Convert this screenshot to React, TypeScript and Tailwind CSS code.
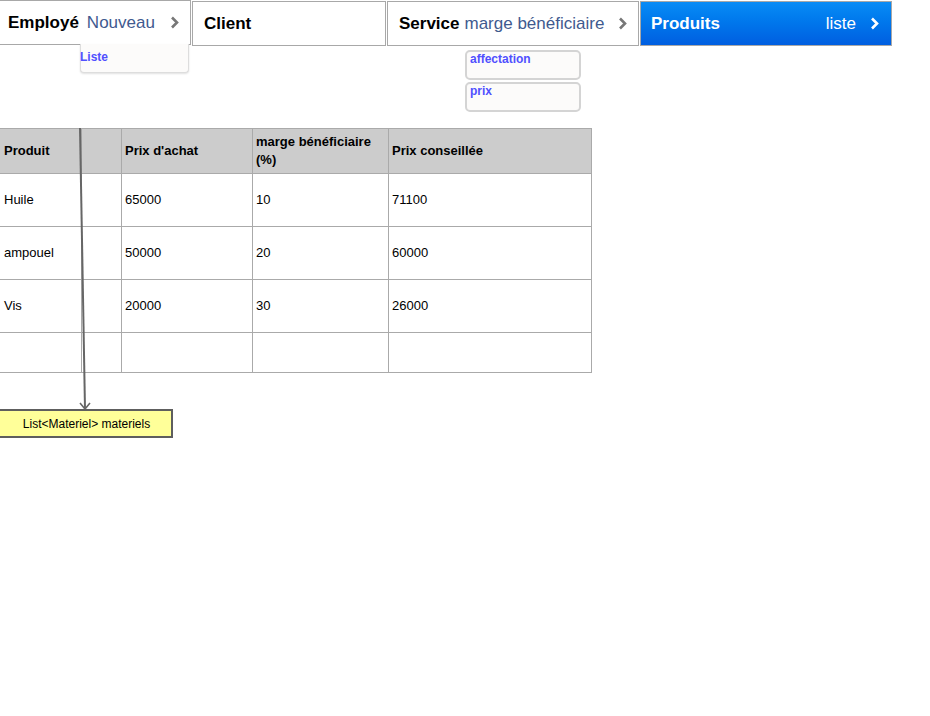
import React from "react";

const font = { fontFamily: '"Liberation Sans", Arial, sans-serif' };

function Chevron({ color }: { color: string }) {
  return (
    <svg width="9" height="13" viewBox="0 0 9 13" className="shrink-0">
      <polyline points="2,1.5 7,6.5 2,11.5" fill="none" stroke={color} strokeWidth="2.6" />
    </svg>
  );
}

const rows = [
  ["Huile", "", "65000", "10", "71100"],
  ["ampouel", "", "50000", "20", "60000"],
  ["Vis", "", "20000", "30", "26000"],
  ["", "", "", "", ""],
];

export default function App() {
  return (
    <div className="relative w-[930px] h-[716px] bg-white overflow-hidden text-black" style={font}>
      {/* barre de navigation */}
      <div className="flex items-start gap-px -ml-px">
        <div className="w-[192px] h-[45px] border border-[#a8a8a8] flex items-center pl-[8px] pr-[11px] text-[17px]">
          <span className="font-bold">Employé</span>
          <span className="ml-[8px] text-[#3f5a8f]">Nouveau</span>
          <span className="ml-auto"><Chevron color="#777777" /></span>
        </div>
        <div className="mt-px w-[194px] h-[45px] border border-[#a8a8a8] flex items-center pl-[11px] text-[17px]">
          <span className="font-bold">Client</span>
        </div>
        <div className="mt-px w-[252px] h-[45px] border border-[#a8a8a8] flex items-center pl-[11px] pr-[11px] text-[17px]">
          <span className="font-bold">Service</span>
          <span className="ml-[5px] text-[#3f5a8f]">marge bénéficiaire</span>
          <span className="ml-auto"><Chevron color="#777777" /></span>
        </div>
        <div className="mt-px w-[252px] h-[45px] border border-[#a8a8a8] bg-gradient-to-b from-[#0a8cf6] to-[#005ee0] flex items-center pl-[10px] pr-[12px] text-[17px] text-white">
          <span className="font-bold">Produits</span>
          <span className="ml-auto mr-[14px]">liste</span>
          <Chevron color="#ffffff" />
        </div>
      </div>

      {/* menus déroulants */}
      <div className="absolute left-[80px] top-[44px] w-[109px] h-[29px] bg-[#fcfbfa] border border-t-0 border-[#dddddd] rounded-b-[4px] shadow-[0_1px_2px_rgba(0,0,0,0.12)]">
        <span className="block -ml-px text-[12px] font-bold text-[#5050ff] leading-[14px] mt-[6px]">Liste</span>
      </div>
      <div className="absolute left-[465px] top-[50px] w-[116px] flex flex-col gap-[2px]">
        <div className="h-[30px] bg-[#fcfbfa] border-2 border-[#d4d4d4] rounded-[5px] pl-[3px]">
          <span className="block text-[12px] font-bold text-[#5050ff] leading-[14px]">affectation</span>
        </div>
        <div className="h-[30px] bg-[#fcfbfa] border-2 border-[#d4d4d4] rounded-[5px] pl-[3px]">
          <span className="block text-[12px] font-bold text-[#5050ff] leading-[14px]">prix</span>
        </div>
      </div>

      {/* tableau */}
      <div className="mt-[82px] -ml-px w-[593px] grid grid-cols-[82px_40px_131px_136px_203px] border-t border-l border-[#aaaaaa] text-[13px]">
        {["Produit", "", "Prix d'achat", "marge bénéficiaire (%)", "Prix conseillée"].map((h, i) => (
          <div
            key={i}
            className={`h-[45px] bg-[#cccccc] border-r border-b border-[#aaaaaa] flex items-center font-bold leading-[18px] ${i === 0 ? "pl-[4px]" : "pl-[3px]"}`}
          >
            {h}
          </div>
        ))}
        {rows.map((r, ri) =>
          r.map((c, ci) => (
            <div
              key={`${ri}-${ci}`}
              className={`${ri === 3 ? "h-[40px]" : "h-[53px]"} border-r border-b border-[#aaaaaa] flex items-center ${ci === 0 ? "pl-[4px]" : "pl-[3px]"}`}
            >
              {c}
            </div>
          ))
        )}
      </div>

      {/* flèche vers la liste */}
      <svg className="absolute left-0 top-0 pointer-events-none" width="930" height="716">
        <line x1="80" y1="128" x2="85" y2="409" stroke="#666666" strokeWidth="2" />
        <polyline points="80,403 85,409 90,403" fill="none" stroke="#666666" strokeWidth="1.6" />
      </svg>

      <div className="absolute left-[-3px] top-[409px] w-[176px] h-[29px] bg-[#ffff99] border-2 border-[#5e5e5e] flex items-center justify-center text-[12px]">
        <span className="ml-[3px]">List&lt;Materiel&gt; materiels</span>
      </div>
    </div>
  );
}
